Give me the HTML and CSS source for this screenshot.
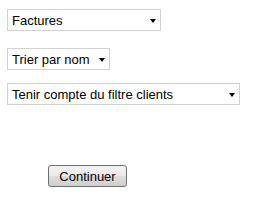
FILE: index.html
```html
<!DOCTYPE html>
<html lang="fr">
<head>
  <meta charset="UTF-8">
  <title>Options</title>
  <link rel="stylesheet" href="styles.css">
</head>
<body>
  <form class="options">
    <span class="pick pick-type">
      <select>
        <option>Factures</option>
      </select>
    </span>
    <span class="pick pick-sort">
      <select>
        <option>Trier par nom</option>
      </select>
    </span>
    <span class="pick pick-filter">
      <select>
        <option>Tenir compte du filtre clients</option>
      </select>
    </span>
    <button type="button" class="go">Continuer</button>
  </form>
</body>
</html>
```
FILE: styles.css
```css
body {
  margin: 0;
  background: #fff;
  font-family: 'Liberation Sans', Arial, sans-serif;
  font-size: 13px;
  color: #000;
}

.options {
  display: flex;
  flex-direction: column;
  align-items: flex-start;
  padding: 9px 0 0 7px;
}

/* fake windows-style dropdown */
.pick {
  position: relative;
  display: block;
  height: 22px;
  box-sizing: border-box;
  border: 1px solid #d2d2d2;
  background: #fff;
}

.pick select {
  appearance: none;
  -webkit-appearance: none;
  border: none;
  background: transparent;
  margin: 0;
  padding: 0 0 0 4px;
  height: 20px;
  width: 100%;
  font: inherit;
  color: #000;
  outline: none;
}

.pick::after {
  content: "";
  position: absolute;
  right: 4px;
  top: 9px;
  width: 0;
  height: 0;
  border-left: 3.5px solid transparent;
  border-right: 3.5px solid transparent;
  border-top: 4px solid #000;
  pointer-events: none;
}

.pick-type {
  width: 154px;
}

.pick-sort {
  width: 103px;
  margin-top: 17px;
}

.pick-filter {
  width: 233px;
  margin-top: 13px;
}

.go {
  margin: 60px 0 0 41px;
  width: 79px;
  height: 22px;
  padding: 0;
  border: 1px solid #707070;
  border-radius: 3px;
  background: linear-gradient(#f2f2f2 0%, #ebebeb 48%, #dddddd 52%, #cfcfcf 100%);
  font: inherit;
  font-size: 13px;
  color: #000;
}
```
